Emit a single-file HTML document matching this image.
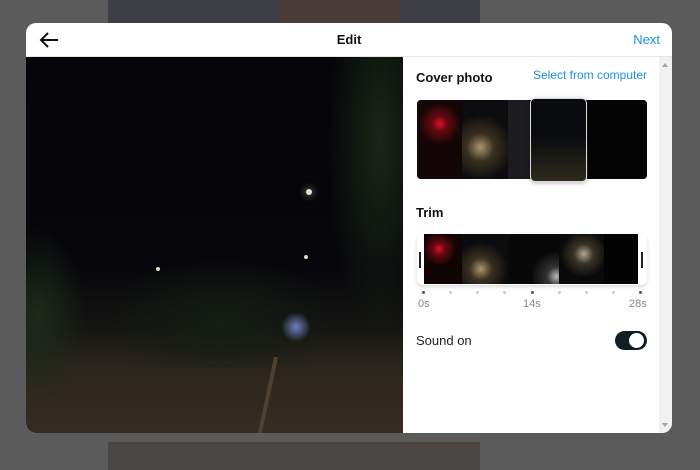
<!DOCTYPE html>
<html><head><style>
*{margin:0;padding:0;box-sizing:border-box}
body{width:700px;height:470px;background:#5b5b5b;position:relative;overflow:hidden;font-family:"Liberation Sans",sans-serif}
.abs{position:absolute}
</style></head><body>
<div class="abs" style="left:108px;top:0;width:372px;height:23px;background:#3d3f45"></div>
<div class="abs" style="left:280px;top:0;width:120px;height:23px;background:#4a3c38"></div>
<div class="abs" style="left:108px;top:442px;width:372px;height:28px;background:#4a4644"></div>
<div class="abs" style="left:26px;top:23px;width:646px;height:410px;background:#fff;border-radius:10px;overflow:hidden">
  <div class="abs" style="left:0;top:0;width:646px;height:34px;border-bottom:1px solid #e6e6e6">
    <svg class="abs" style="left:13px;top:8px" width="20" height="18" viewBox="0 0 20 18"><path d="M19 9H2M9 2L2 9l7 7" fill="none" stroke="#111" stroke-width="2"/></svg>
    <div class="abs" style="left:0;width:646px;top:9px;text-align:center;font-size:13px;font-weight:bold;color:#111">Edit</div>
    <div class="abs" style="right:12px;top:9px;font-size:13px;color:#1a8fef">Next</div>
  </div>
  <div class="abs" style="left:0;top:34px;width:377px;height:376px;background:linear-gradient(180deg,#050509 0%,#07070b 55%,#141512 72%,#2a251c 82%,#352d22 100%)">
    <div class="abs" style="left:0;top:170px;width:60px;height:180px;background:radial-gradient(ellipse at 20% 50%,#1e2a1a 0%,rgba(20,28,18,0) 70%)"></div>
    <div class="abs" style="left:80px;top:200px;width:230px;height:110px;background:radial-gradient(ellipse at 50% 60%,#151d14 0%,rgba(15,20,14,0) 70%)"></div>
    <div class="abs" style="left:300px;top:0;width:77px;height:280px;background:radial-gradient(ellipse at 70% 30%,#1b2617 0%,rgba(20,28,18,0) 70%)"></div>
    <div class="abs" style="left:255px;top:255px;width:30px;height:30px;border-radius:50%;background:radial-gradient(#6f7ec0,rgba(40,50,100,0) 70%)"></div>
    <div class="abs" style="left:280px;top:132px;width:6px;height:6px;border-radius:50%;background:#e8e0c8;box-shadow:0 0 8px #c8b880"></div>
    <div class="abs" style="left:130px;top:210px;width:4px;height:4px;border-radius:50%;background:#e0d8c0"></div>
    <div class="abs" style="left:278px;top:198px;width:4px;height:4px;border-radius:50%;background:#e0d8c0"></div>
    <div class="abs" style="left:240px;top:300px;width:4px;height:76px;background:#4d4232;transform:skewX(-12deg)"></div>
  </div>
  <div class="abs" style="left:377px;top:34px;width:256px;height:376px;background:#fff">
    <div class="abs" style="left:13px;top:13px;font-size:13px;font-weight:bold;color:#111">Cover photo</div>
    <div class="abs" style="right:12px;top:11px;font-size:12px;color:#1a8fef">Select from computer</div>
    <div class="abs" style="left:14px;top:43px;width:230px;height:79px;border-radius:4px;overflow:hidden;background:#050505;display:flex">
      <div style="width:45px;background:radial-gradient(circle at 50% 30%,#e0102a 0,#6a0a10 12%,#140606 35%)"></div>
      <div style="width:46px;background:radial-gradient(circle at 40% 60%,#a89870 0,#3a3020 25%,#0c0c0e 60%),#0c0c0e"></div>
      <div style="width:22px;background:#1c1c1e"></div>
      <div style="width:58px;background:linear-gradient(#08080a 40%,#2b2618)"></div>
      <div style="flex:1;background:#040404"></div>
    </div>
    <div class="abs" style="left:127px;top:41px;width:57px;height:84px;border:1.5px solid #ddd;border-radius:5px;background:linear-gradient(#0a0b0e 45%,#2e2a1e);box-shadow:0 1px 4px rgba(0,0,0,.3)"></div>
    <div class="abs" style="left:13px;top:148px;font-size:13px;font-weight:bold;color:#111">Trim</div>
    <div class="abs" style="left:14px;top:177px;width:230px;height:51px;border-radius:6px;background:#fff;box-shadow:0 2px 4px rgba(0,0,0,.15)">
      <div class="abs" style="left:7px;top:0;width:214px;height:50px;background:#070708;display:flex">
        <div style="width:38px;background:radial-gradient(circle at 40% 30%,#e0102a 0,#6a0a10 14%,#100404 40%)"></div>
        <div style="width:47px;background:radial-gradient(circle at 40% 70%,#a89870 0,#3a3020 25%,#0c0c0e 60%)"></div>
        <div style="width:50px;background:radial-gradient(circle at 95% 85%,#bbb 0,#333 15%,#080808 40%)"></div>
        <div style="width:45px;background:radial-gradient(circle at 55% 40%,#b0a890 0,#3a3428 25%,#0a0a0a 60%)"></div>
        <div style="flex:1;background:#030303"></div>
      </div>
      <div class="abs" style="left:2px;top:18px;width:2px;height:16px;background:#222"></div>
      <div class="abs" style="left:224px;top:18px;width:2px;height:16px;background:#222"></div>
    </div>
    <div class="abs" style="left:19px;top:234px;width:220px;height:3px;display:flex;justify-content:space-between">
      <i style="width:3px;height:3px;border-radius:50%;background:#555"></i><i style="width:3px;height:3px;border-radius:50%;background:#ccc"></i><i style="width:3px;height:3px;border-radius:50%;background:#ccc"></i><i style="width:3px;height:3px;border-radius:50%;background:#ccc"></i><i style="width:3px;height:3px;border-radius:50%;background:#555"></i><i style="width:3px;height:3px;border-radius:50%;background:#ccc"></i><i style="width:3px;height:3px;border-radius:50%;background:#ccc"></i><i style="width:3px;height:3px;border-radius:50%;background:#ccc"></i><i style="width:3px;height:3px;border-radius:50%;background:#555"></i>
    </div>
    <div class="abs" style="left:15px;top:241px;font-size:11px;color:#888">0s</div>
    <div class="abs" style="left:120px;top:241px;font-size:11px;color:#888">14s</div>
    <div class="abs" style="left:226px;top:241px;font-size:11px;color:#888">28s</div>
    <div class="abs" style="left:13px;top:276px;font-size:13px;color:#222">Sound on</div>
    <div class="abs" style="left:212px;top:274px;width:32px;height:19px;border-radius:10px;background:#111c25">
      <div class="abs" style="left:14px;top:2px;width:15px;height:15px;border-radius:50%;background:#fff"></div>
    </div>
  </div>
  <div class="abs" style="left:633px;top:34px;width:13px;height:376px;background:#f1f1f1">
    <div class="abs" style="left:3px;top:6px;border:3px solid transparent;border-bottom:4px solid #a3a3a3;border-top:0"></div>
    <div class="abs" style="left:3px;top:366px;border:3px solid transparent;border-top:4px solid #a3a3a3;border-bottom:0"></div>
  </div>
</div>
</body></html>
